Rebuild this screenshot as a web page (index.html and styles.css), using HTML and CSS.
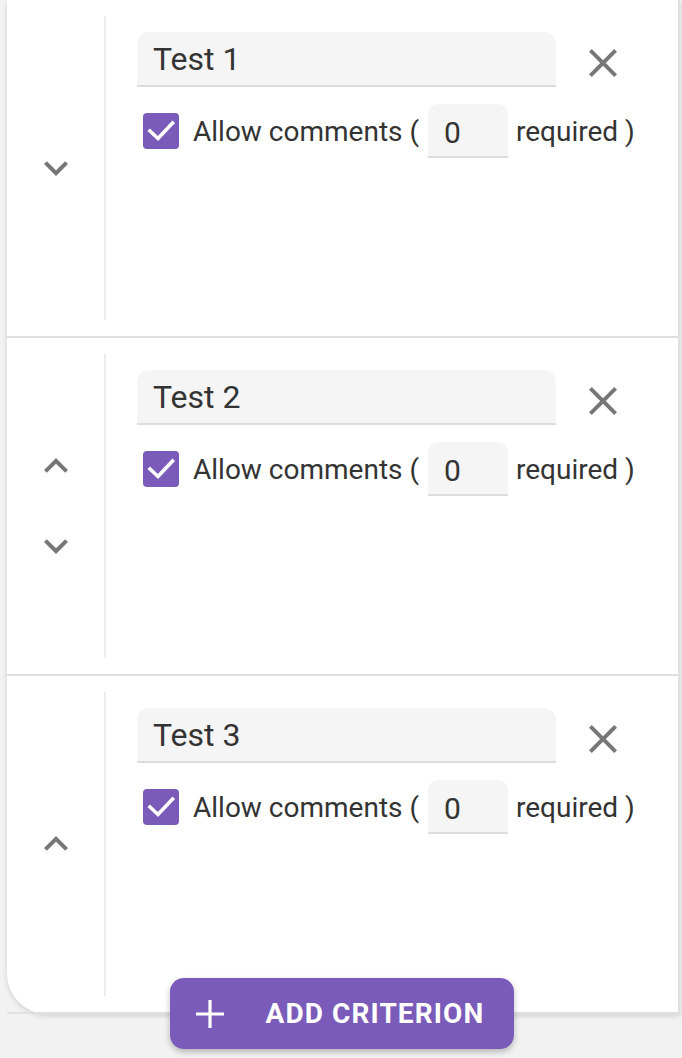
FILE: index.html
```html
<!DOCTYPE html>
<html lang="en">
<head>
<meta charset="utf-8">
<title>Criteria</title>
<link rel="stylesheet" href="styles.css">
</head>
<body>
<div class="page">
  <div class="card">
    <div class="row">
      <div class="nav">
        <button class="icon-btn" aria-label="Move down"><svg viewBox="0 0 24 24" width="48" height="48"><path d="M16.59 8.59L12 13.17 7.41 8.59 6 10l6 6 6-6z"/></svg></button>
      </div>
      <div class="content">
        <div class="title-row">
          <div class="title-field">Test 1</div>
          <button class="icon-btn close" aria-label="Remove"><svg viewBox="0 0 24 24" width="48" height="48"><path d="M19 6.41L17.59 5 12 10.59 6.41 5 5 6.41 10.59 12 5 17.59 6.41 19 12 13.41 17.59 19 19 17.59 13.41 12z"/></svg></button>
        </div>
        <div class="comment-row">
          <svg class="checkbox" viewBox="0 0 36 36" width="36" height="36"><rect width="36" height="36" rx="4"/><polyline points="7,18 15,25.5 29.5,10"/></svg>
          <span class="label">Allow comments (</span>
          <div class="num-field">0</div>
          <span class="label after">required )</span>
        </div>
      </div>
    </div>
    <div class="row">
      <div class="nav">
        <button class="icon-btn" aria-label="Move up"><svg viewBox="0 0 24 24" width="48" height="48"><path d="M12 8l-6 6 1.41 1.41L12 10.83l4.59 4.58L18 14z"/></svg></button>
        <button class="icon-btn" aria-label="Move down"><svg viewBox="0 0 24 24" width="48" height="48"><path d="M16.59 8.59L12 13.17 7.41 8.59 6 10l6 6 6-6z"/></svg></button>
      </div>
      <div class="content">
        <div class="title-row">
          <div class="title-field">Test 2</div>
          <button class="icon-btn close" aria-label="Remove"><svg viewBox="0 0 24 24" width="48" height="48"><path d="M19 6.41L17.59 5 12 10.59 6.41 5 5 6.41 10.59 12 5 17.59 6.41 19 12 13.41 17.59 19 19 17.59 13.41 12z"/></svg></button>
        </div>
        <div class="comment-row">
          <svg class="checkbox" viewBox="0 0 36 36" width="36" height="36"><rect width="36" height="36" rx="4"/><polyline points="7,18 15,25.5 29.5,10"/></svg>
          <span class="label">Allow comments (</span>
          <div class="num-field">0</div>
          <span class="label after">required )</span>
        </div>
      </div>
    </div>
    <div class="row">
      <div class="nav">
        <button class="icon-btn" aria-label="Move up"><svg viewBox="0 0 24 24" width="48" height="48"><path d="M12 8l-6 6 1.41 1.41L12 10.83l4.59 4.58L18 14z"/></svg></button>
      </div>
      <div class="content">
        <div class="title-row">
          <div class="title-field">Test 3</div>
          <button class="icon-btn close" aria-label="Remove"><svg viewBox="0 0 24 24" width="48" height="48"><path d="M19 6.41L17.59 5 12 10.59 6.41 5 5 6.41 10.59 12 5 17.59 6.41 19 12 13.41 17.59 19 19 17.59 13.41 12z"/></svg></button>
        </div>
        <div class="comment-row">
          <svg class="checkbox" viewBox="0 0 36 36" width="36" height="36"><rect width="36" height="36" rx="4"/><polyline points="7,18 15,25.5 29.5,10"/></svg>
          <span class="label">Allow comments (</span>
          <div class="num-field">0</div>
          <span class="label after">required )</span>
        </div>
      </div>
    </div>
  </div>
  <div class="actions">
    <button class="add-btn">
      <svg viewBox="0 0 28 28" width="28" height="28"><path d="M14 0v28M0 14h28"/></svg>
      <span>Add criterion</span>
    </button>
  </div>
</div>
</body>
</html>
```

FILE: styles.css
```css
* { box-sizing: border-box; }
html, body {
  margin: 0;
  padding: 0;
  background: #f2f2f2;
  font-family: Roboto, "Liberation Sans", Arial, sans-serif;
  color: #333;
}
.page {
  width: 682px;
  height: 1058px;
  overflow: hidden;
}
.card {
  margin-left: 7px;
  width: 673px;
  background: #fff;
  border-right: 2px solid #e0e0e0;
  border-bottom-left-radius: 40px;
  box-shadow: 0 2px 5px rgba(0, 0, 0, 0.14);
}
.row {
  display: flex;
  height: 338px;
  border-bottom: 2px solid #e0e0e0;
}
.nav {
  width: 97px;
  flex: none;
  display: flex;
  flex-direction: column;
  align-items: center;
  justify-content: center;
  gap: 32px;
}
.icon-btn {
  width: 48px;
  height: 48px;
  padding: 0;
  border: 0;
  background: none;
  display: block;
  fill: #777;
}
.icon-btn svg { display: block; }
.content {
  flex: 1;
  margin: 16px 0;
  border-left: 2px solid #ececec;
  padding: 16px 0 0 31px;
}
.title-row {
  display: flex;
  align-items: flex-start;
}
.title-field {
  width: 419px;
  height: 55px;
  padding: 2px 0 0 16px;
  line-height: 51px;
  font-size: 32px;
  background: #f5f5f5;
  border-bottom: 2px solid #dcdcdc;
  border-radius: 12px 12px 0 0;
}
.close {
  margin: 7px 0 0 23px;
}
.comment-row {
  display: flex;
  align-items: center;
  margin-top: 17px;
  height: 54px;
}
.checkbox {
  margin-left: 6px;
  flex: none;
}
.checkbox rect { fill: #7a5bba; }
.checkbox polyline {
  fill: none;
  stroke: #fff;
  stroke-width: 3.6;
  stroke-linecap: square;
}
.label {
  font-size: 28px;
  margin-left: 14px;
  white-space: nowrap;
}
.label.after { margin-left: 8px; }
.num-field {
  margin-left: 9px;
  width: 80px;
  height: 54px;
  padding: 6px 0 0 16px;
  line-height: 46px;
  font-size: 30px;
  background: #f5f5f5;
  border-bottom: 2px solid #dcdcdc;
  border-radius: 10px 10px 0 0;
}
.actions {
  display: flex;
  justify-content: center;
  margin-top: -36px;
  position: relative;
}
.add-btn {
  display: flex;
  align-items: center;
  width: 344px;
  height: 71px;
  margin-left: 1px;
  padding: 0 0 0 26px;
  border: 0;
  border-radius: 14px;
  background: #7a5bba;
  color: #fff;
  box-shadow: 0 3px 6px rgba(0, 0, 0, 0.25);
  font-family: Roboto, "Liberation Sans", Arial, sans-serif;
  font-size: 28px;
  font-weight: 700;
  letter-spacing: 1.1px;
  text-transform: uppercase;
}
.add-btn svg {
  flex: none;
  stroke: #fff;
  stroke-width: 3.2;
}
.add-btn span { margin-left: 42px; }
```
